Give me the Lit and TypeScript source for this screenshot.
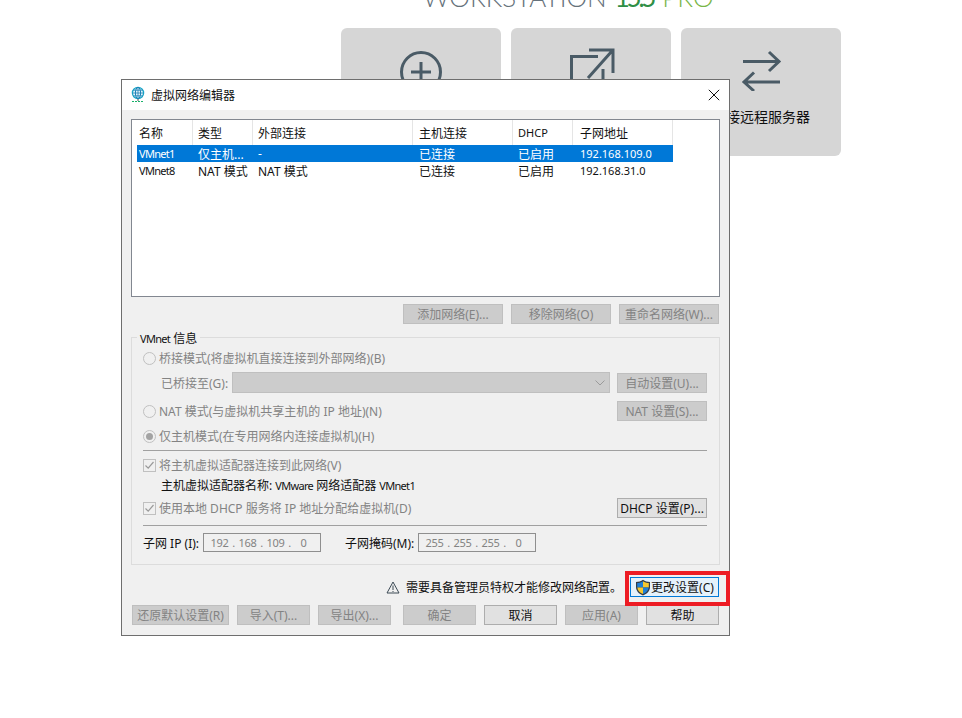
import { LitElement, html, css, svg } from "lit";
import { customElement } from "lit/decorators.js";

const COLS = ["名称", "类型", "外部连接", "主机连接", "DHCP", "子网地址"];
const ROWS = [
  { sel: true, c: ["VMnet1", "仅主机...", "-", "已连接", "已启用", "192.168.109.0"] },
  { sel: false, c: ["VMnet8", "NAT 模式", "NAT 模式", "已连接", "已启用", "192.168.31.0"] },
];
const ip = (p: string[]) => html`<div class="ip">${p.map((x, i) => html`<span class="oct">${x}</span>${i < 3 ? html`<span class="dot">.</span>` : ""}`)}</div>`;
const radio = (on = false) => html`<span class="radio">${on ? html`<i></i>` : ""}</span>`;
const check = svg`<path d="M2.5 6.5 L5.2 9.2 L10.5 3" fill="none" stroke="#9a9a9a" stroke-width="1.2"/>`;
const checkbox = html`<svg class="cb" width="13" height="13" viewBox="0 0 13 13"><rect x=".5" y=".5" width="12" height="12" fill="#f0f0f0" stroke="#c0c0c0"/>${check}</svg>`;

@customElement("app-root")
export class AppRoot extends LitElement {
  static styles = css`
    :host { display: block; position: relative; width: 962px; height: 718px; overflow: hidden; background: #fff;
      font-family: "Noto Sans", "Noto Sans CJK SC", sans-serif; font-size: 12px; color: #111; }
    * { box-sizing: border-box; }
    .brand { height: 28px; padding-left: 423px; display: flex; align-items: flex-start; overflow: hidden;
      font-family: Lato, sans-serif; font-weight: 300; font-size: 26px; line-height: 0; white-space: nowrap; color: #66727b; }
    .brand span, .brand b, .brand em { display: block; margin-top: -3px; }
    .brand b { font-weight: 400; color: #2f8f46; letter-spacing: -3.2px; margin-left: 8px; }
    .brand em { font-style: normal; color: #7ab648; font-weight: 300; margin-left: 9px; }
    .cards { display: flex; gap: 10px; padding-left: 341px; }
    .card { width: 160px; height: 128px; border-radius: 6px; background: #d6d6d6; display: flex; flex-direction: column;
      align-items: center; padding-top: 19px; gap: 15px; font-size: 14px; color: #111; }
    .card svg { display: block; }

    .dialog { position: absolute; left: 121px; top: 79px; width: 609px; height: 557px; background: #f0f0f0;
      border: 1px solid #6e6e6e; display: flex; flex-direction: column; }
    .title { height: 30px; background: #fff; display: flex; align-items: center; padding: 0 9px 1px 8px; gap: 5px; flex: none; }
    .title span { flex: 1; }
    .body { flex: 1; padding: 9px 9px 0 9px; display: flex; flex-direction: column; }
    .list { height: 178px; background: #fff; border: 1px solid #828790; padding: 0 0 0 5px; flex: none; }
    .grid { display: grid; grid-template-columns: 56px 60px 160px 100px 60px 100px; width: 536px; }
    .hc { height: 25px; display: flex; align-items: center; padding-left: 5px; border-right: 1px solid #e5e5e5; }
    .hc.p1, .c.p1 { padding-left: 2px; }
    .hc.p4, .c.p4 { padding-left: 6px; }
    .hc.p6, .c.p6 { padding-left: 7px; }
    .hc.sm { font-size: 11px; }
    .c { height: 17px; display: flex; align-items: center; padding-left: 5px; white-space: nowrap; }
    .c.p6 { font-size: 11px; }
    .c.sel { background: #0078d7; color: #fff; }
    .vm { font-size: 11px; letter-spacing: -0.7px; }

    .btn { height: 20px; display: flex; align-items: center; justify-content: center; background: #e1e1e1;
      border: 1px solid #adadad; white-space: nowrap; flex: none; }
    .btn.off { background: #cccccc; border-color: #bfbfbf; color: #838383; }
    .btn.w100 { width: 100px; }
    .btn.w90 { width: 90px; }
    .btn.w73 { width: 73px; }
    .btn.w97 { width: 97px; }
    .btn.ml { margin-left: 4px; }
    .btn.focus { width: 89px; background: #e5f1fb; border-color: #0078d7; gap: 0; color: #111; }
    .tools { display: flex; justify-content: flex-end; gap: 8px; margin: 7px 1px 0 0; flex: none; }

    .group { position: relative; height: 228px; margin-top: 13px; border: 1px solid #dcdcdc; padding: 10px 12px 0 11px; flex: none; color: #838383; }
    .legend { position: absolute; left: 5px; top: -7px; padding: 0 3px; background: #f0f0f0; color: #111; line-height: 16px; }
    .row { display: flex; align-items: center; height: 20px; }
    .row.between { justify-content: space-between; }
    .m2 { margin-top: 2px; }
    .m4 { margin-top: 4px; }
    .m5 { margin-top: 5px; }
    .m7 { margin-top: 7px; }
    .m8 { margin-top: 8px; }
    .lab { display: flex; align-items: center; gap: 3px; white-space: nowrap; }
    .radio { width: 13px; height: 13px; border: 1px solid #c0c0c0; border-radius: 50%; background: #f0f0f0; display: flex; align-items: center; justify-content: center; flex: none; }
    .radio i { width: 7px; height: 7px; border-radius: 50%; background: #a3a3a3; display: block; }
    .cb { flex: none; display: block; }
    .combo-row { height: 21px; display: flex; align-items: center; margin-top: 4px; }
    .combo-lab { width: 89px; padding-left: 18px; white-space: nowrap; }
    .combo { width: 378px; height: 21px; background: #cccccc; border: 1px solid #bfbfbf; display: flex; align-items: center; justify-content: flex-end; padding-right: 3px; flex: none; }
    .combo + .btn { margin-left: 7px; }
    hr { border: 0; border-top: 1px solid #a0a0a0; margin: 0; height: 1px; }
    .h18 { height: 18px; }
    .strong { color: #111; }
    .indent { padding-left: 18px; white-space: nowrap; }
    .ip { width: 118px; height: 19px; border: 1px solid #8f8f8f; background: #f0f0f0; display: flex; align-items: center; color: #838383; padding-left: 4.5px; font-size: 11px; letter-spacing: -0.3px; }
    .oct { width: 22px; text-align: center; }
    .dot { width: 6px; text-align: center; }
    .subnet { display: flex; align-items: center; height: 19px; margin-top: 7px; color: #111; white-space: nowrap; }
    .subnet .l1 { width: 60px; }
    .subnet .l2 { width: 73px; margin-left: 24px; }
    .notice { height: 20px; margin-top: 12px; display: flex; align-items: center; justify-content: flex-end; padding-right: 1px; flex: none; }
    .notice svg.warn { margin-right: 6px; }
    .notice .msg { margin-right: 8px; white-space: nowrap; }
    .foot { display: flex; gap: 8px; margin: 8px 1px 0 1px; flex: none; }
    .red { position: absolute; left: 503px; top: 491px; width: 105px; height: 35px; border: 4px solid #ed1c24; pointer-events: none; }
  `;

  private cellClass(i: number, sel: boolean) {
    return `c ${sel ? "sel" : ""} ${i === 0 ? "p1" : ""} ${i === 3 ? "p4" : ""} ${i === 5 ? "p6" : ""}`;
  }

  render() {
    return html`
      <div class="brand"><span>WORKSTATION</span><b>15.5</b><em>PRO</em></div>
      <div class="cards">
        <div class="card">
          <svg width="44" height="44" viewBox="0 0 44 44" fill="none" stroke="#4a5b66" stroke-width="3"><circle cx="22" cy="25" r="19.5"/><path d="M22 15v20M12 25h20"/></svg>
          <span>创建新的虚拟机</span>
        </div>
        <div class="card">
          <svg width="48" height="44" viewBox="0 0 48 44" fill="none" stroke="#4a5b66" stroke-width="3"><path d="M31 9.5H4.5V44H36V22"/><path d="M21 31L45 4M22 3H46V26"/></svg>
          <span>打开虚拟机</span>
        </div>
        <div class="card">
          <svg width="44" height="44" viewBox="0 0 44 44" fill="none" stroke="#4a5b66" stroke-width="3"><path d="M4 14.500H40M30 5L40 14.500L30 24"/><path d="M41 35H5M15 25.500L5 35L15 44"/></svg>
          <span>连接远程服务器</span>
        </div>
      </div>

      <div class="dialog">
        <div class="title">
          <svg width="16" height="17" viewBox="0 0 16 17" fill="none"><circle cx="8" cy="7" r="5.600" fill="#e4f6fa" stroke="#1aa6c8" stroke-width="1.300"/><ellipse cx="8" cy="7" rx="2.600" ry="5.600" stroke="#1c7fb5"/><path d="M2.500 7h11M3.300 4.200h9.400M3.300 9.800h9.400M8 1v11" stroke="#1c7fb5" stroke-width=".8"/><path d="M8 13v2" stroke="#555"/><path d="M2 15.500h12" stroke="#18b26b" stroke-width="1.200" stroke-dasharray="2 1"/></svg>
          <span>虚拟网络编辑器</span>
          <svg width="12" height="12" viewBox="0 0 12 12" stroke="#111" stroke-width="1"><path d="M.8 .8L11.200 11.200M11.200 .8L.8 11.200"/></svg>
        </div>
        <div class="body">
          <div class="list">
            <div class="grid">
              ${COLS.map((h, i) => html`<div class="hc ${h === "DHCP" ? "sm" : ""} ${i === 0 ? "p1" : ""} ${i === 3 ? "p4" : ""} ${i === 5 ? "p6" : ""}">${h}</div>`)}
              ${ROWS.map((r) => r.c.map((v, i) => html`<div class=${this.cellClass(i, r.sel)}>${i === 0 ? html`<span class="vm">${v}</span>` : v}</div>`))}
            </div>
          </div>
          <div class="tools">
            <div class="btn off w100">添加网络(E)...</div>
            <div class="btn off w100">移除网络(O)</div>
            <div class="btn off w100">重命名网络(W)...</div>
          </div>
          <div class="group">
            <div class="legend"><span class="vm">VMnet</span> 信息</div>
            <div class="row"><span class="lab">${radio()}桥接模式(将虚拟机直接连接到外部网络)(B)</span></div>
            <div class="combo-row">
              <span class="combo-lab">已桥接至(G):</span>
              <div class="combo"><svg width="12" height="8" viewBox="0 0 12 8" fill="none" stroke="#9a9a9a"><path d="M1.500 1.500L6 6L10.500 1.500"/></svg></div>
              <div class="btn off w90">自动设置(U)...</div>
            </div>
            <div class="row between m8"><span class="lab">${radio()}NAT 模式(与虚拟机共享主机的 IP 地址)(N)</span><div class="btn off w90">NAT 设置(S)...</div></div>
            <div class="row m5"><span class="lab">${radio(true)}仅主机模式(在专用网络内连接虚拟机)(H)</span></div>
            <hr class="m4" />
            <div class="row h18 m5"><span class="lab">${checkbox}将主机虚拟适配器连接到此网络(V)</span></div>
            <div class="row h18 m2 strong"><span class="indent">主机虚拟适配器名称: <span class="vm">VMware</span> 网络适配器 <span class="vm">VMnet1</span></span></div>
            <div class="row between m4"><span class="lab">${checkbox}使用本地 DHCP 服务将 IP 地址分配给虚拟机(D)</span><div class="btn w90 strong">DHCP 设置(P)...</div></div>
            <hr class="m7" />
            <div class="subnet">
              <span class="l1">子网 IP (I):</span>${ip(["192", "168", "109", "0"])}
              <span class="l2">子网掩码(M):</span>${ip(["255", "255", "255", "0"])}
            </div>
          </div>
          <div class="notice">
            <svg class="warn" width="14" height="13" viewBox="0 0 14 13" fill="none" stroke="#3c4a55"><path d="M7 1L13 12H1Z"/><path d="M7 4.500V9M7 10v1"/></svg>
            <span class="msg">需要具备管理员特权才能修改网络配置。</span>
            <div class="btn focus">
              <svg width="16" height="17" viewBox="0 0 16 17"><path d="M8 .8C10 2.300 12.500 3 15 3V8C15 12 12 15 8 16.400C4 15 1 12 1 8V3C3.500 3 6 2.300 8 .8Z" fill="#333c48"/><path d="M8 2.200V8.500H2.200V4C4.500 4 6.300 3.300 8 2.200Z" fill="#1f7fd6"/><path d="M8 2.200C9.700 3.300 11.500 4 13.800 4V8.500H8Z" fill="#f6c72d"/><path d="M8 8.500V15C5 13.800 2.600 11.600 2.300 8.500Z" fill="#f6c72d"/><path d="M8 8.500H13.700C13.400 11.600 11 13.800 8 15Z" fill="#1f7fd6"/></svg>
              更改设置(C)
            </div>
          </div>
          <div class="foot">
            <div class="btn off w97">还原默认设置(R)</div>
            <div class="btn off w73">导入(T)...</div>
            <div class="btn off w73">导出(X)...</div>
            <div class="btn off w73 ml">确定</div>
            <div class="btn w73">取消</div>
            <div class="btn off w73">应用(A)</div>
            <div class="btn w73">帮助</div>
          </div>
        </div>
        <div class="red"></div>
      </div>
    `;
  }
}
